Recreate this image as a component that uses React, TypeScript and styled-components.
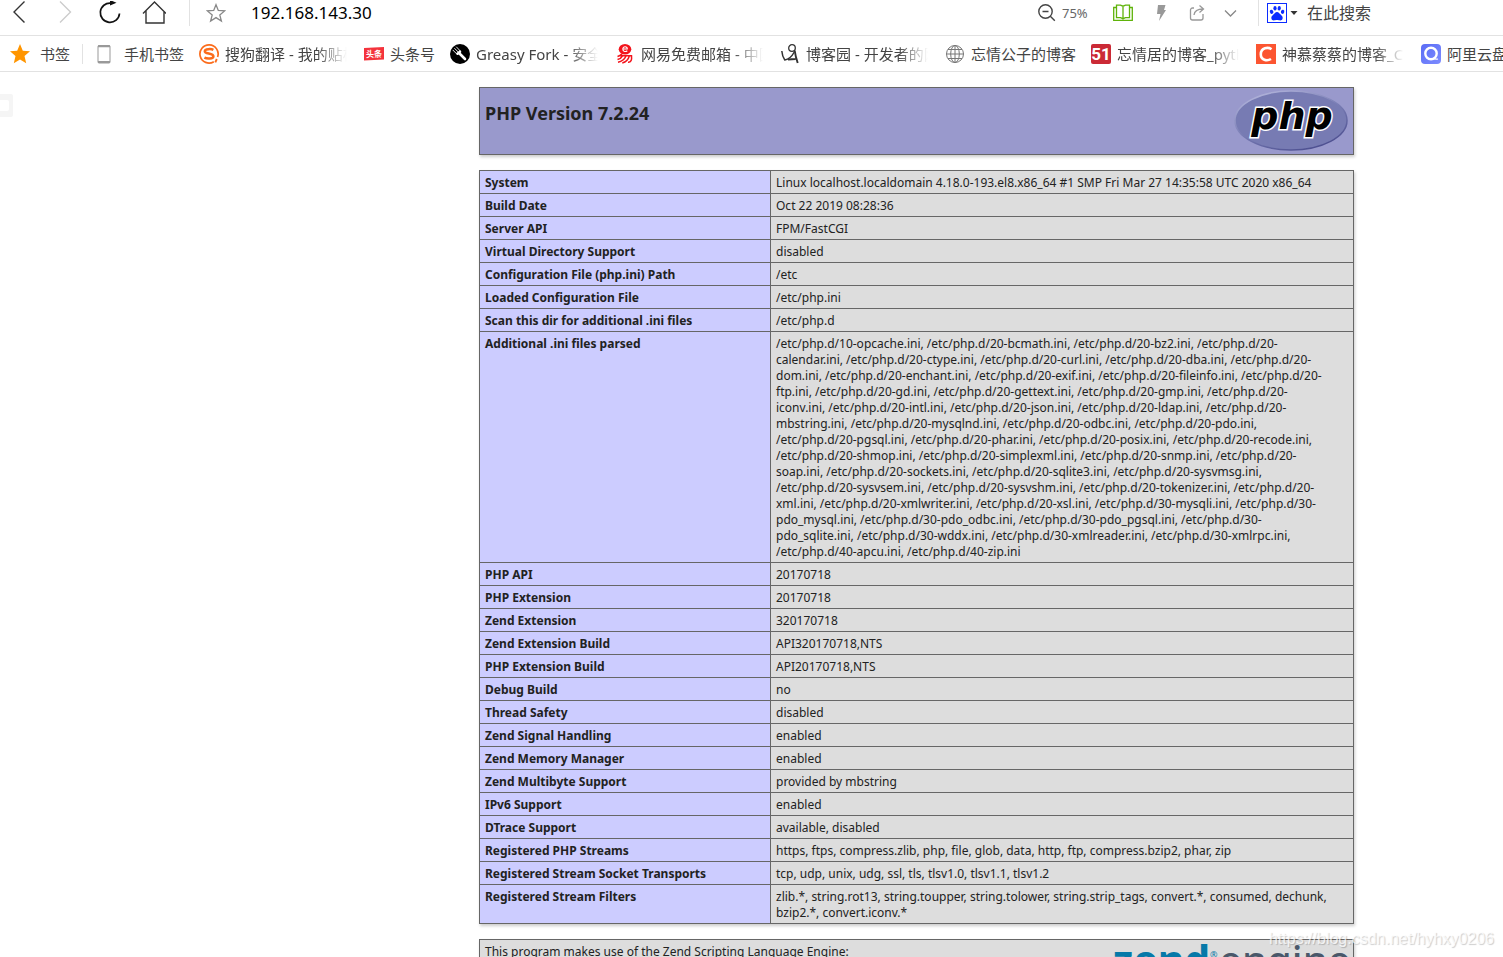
import React from "react";
import styled, { createGlobalStyle } from "styled-components";

const GlobalStyle = createGlobalStyle`
  * { box-sizing: border-box; }
  body {
    margin: 0;
    background: #fff;
    color: #222;
    font-family: "Noto Sans", "Noto Sans CJK SC", sans-serif;
  }
  button, input { font-family: inherit; }
`;

const Shell = styled.div`
  position: relative;
  display: flex;
  flex-direction: column;
  height: 100vh;
  overflow: hidden;
`;

const Toolbar = styled.header`
  display: flex;
  align-items: center;
  flex: none;
  height: 36px;
  padding: 0 0 10px 7px;
  border-bottom: 1px solid #e2e2e2;
`;

const ButtonGroup = styled.div<{ $gap: number }>`
  display: flex;
  align-items: center;
  gap: ${(p) => p.$gap}px;
`;

const IconButton = styled.button<{ $width?: number }>`
  display: flex;
  align-items: center;
  justify-content: center;
  flex: none;
  width: ${(p) => p.$width ?? 24}px;
  height: 24px;
  padding: 0;
  border: 0;
  background: none;
`;

const Separator = styled.span<{ $height: number; $margin: string }>`
  flex: none;
  width: 1px;
  height: ${(p) => p.$height}px;
  margin: ${(p) => p.$margin};
  background: #e2e2e2;
`;

const AddressInput = styled.input`
  flex: 1;
  min-width: 0;
  height: 26px;
  padding: 0;
  margin-left: 25px;
  border: 0;
  outline: 0;
  background: none;
  color: #000;
  font-size: 17px;
`;

const ZoomButton = styled.button`
  display: flex;
  align-items: center;
  gap: 6px;
  width: 75px;
  height: 24px;
  padding: 0;
  border: 0;
  background: none;
  color: #666;
  font-size: 13px;
`;

const EngineButton = styled(IconButton)`
  justify-content: flex-start;
  gap: 3px;
`;

const SearchInput = styled.input`
  flex: none;
  width: 196px;
  height: 26px;
  padding: 0;
  margin-left: 8px;
  border: 0;
  outline: 0;
  background: none;
  font-size: 16px;
  &::placeholder { color: #444; opacity: 1; }
`;

const BookmarkBar = styled.nav`
  display: flex;
  align-items: center;
  flex: none;
  height: 36px;
  padding: 0 0 0 10px;
  border-bottom: 1px solid #e2e2e2;
  overflow: hidden;
`;

const BookmarkList = styled.div`
  display: flex;
  align-items: center;
  gap: 15px;
`;

const Bookmark = styled.a<{ $gap?: number }>`
  display: flex;
  align-items: flex-start;
  flex: none;
  gap: ${(p) => p.$gap ?? 6}px;
  color: #444;
  font-size: 15px;
  line-height: 20px;
  text-decoration: none;
  svg { flex: none; }
`;

const BookmarkLabel = styled.span<{ $fade?: boolean }>`
  max-width: 124px;
  overflow: hidden;
  white-space: nowrap;
  ${(p) =>
    p.$fade &&
    `width: 124px;
     mask-image: linear-gradient(to right, #000 92px, transparent 122px);`}
`;

const Page = styled.main`
  display: flex;
  flex: 1;
  min-height: 0;
  justify-content: flex-end;
  padding: 15px 149px 0 0;
  overflow: hidden;
`;

const Info = styled.div`
  display: flex;
  flex-direction: column;
  flex: none;
  gap: 15px;
  width: 875px;
  font-size: 12px;
  line-height: 16px;
`;

const Banner = styled.section`
  display: flex;
  justify-content: space-between;
  align-items: flex-start;
  flex: none;
  height: 68px;
  padding: 2px 5px;
  border: 1px solid #666;
  background: #99c;
  box-shadow: 1px 2px 3px #ccc;
`;

const Title = styled.h1`
  margin: 10px 0 0;
  font-size: 18px;
  line-height: 26px;
`;

const InfoTable = styled.table`
  flex: none;
  width: 100%;
  border-collapse: collapse;
  table-layout: fixed;
  box-shadow: 1px 2px 3px #ccc;
`;

const Key = styled.th`
  width: 291px;
  padding: 4px 5px 2px;
  border: 1px solid #666;
  background: #ccf;
  text-align: left;
  vertical-align: top;
`;

const Value = styled.td`
  padding: 4px 5px 2px;
  border: 1px solid #666;
  background: #ddd;
  white-space: pre;
  vertical-align: top;
`;

const Credits = styled.section`
  display: flex;
  justify-content: space-between;
  flex: none;
  height: 60px;
  padding: 4px 0 4px 5px;
  border: 1px solid #666;
  background: #ddd;
  box-shadow: 1px 2px 3px #ccc;
`;

const SideTab = styled.div`
  position: absolute;
  top: 94px;
  left: 0;
  width: 13px;
  height: 23px;
  padding: 6px 4px 6px 0;
  border-radius: 0 2px 2px 0;
  background: #f5f5f5;
  &::before {
    content: "";
    display: block;
    height: 11px;
    border-radius: 0 2px 2px 0;
    background: #fff;
  }
`;

const Watermark = styled.div`
  position: absolute;
  right: 9px;
  bottom: 8px;
  color: rgba(255, 255, 255, 0.75);
  font-family: "Liberation Sans", sans-serif;
  font-size: 16px;
  line-height: 20px;
  text-shadow: 1px 1px 1px rgba(0, 0, 0, 0.2);
`;

const BackIcon = () => (
  <svg width="24" height="24" viewBox="0 0 24 24" fill="none" stroke="#333" strokeWidth="1.4">
    <path d="M17.5 0.5 7 11l10.500 10.500" />
  </svg>
);
const ForwardIcon = () => (
  <svg width="24" height="24" viewBox="0 0 24 24" fill="none" stroke="#ccc" strokeWidth="1.4">
    <path d="M8 0.500 18.500 11 8 21.500" />
  </svg>
);
const ReloadIcon = () => (
  <svg width="24" height="24" viewBox="0 0 24 24" fill="none" stroke="#111" strokeWidth="1.700">
    <path d="M22.500 12.500A9.600 9.600 0 1 1 14 2.200" />
    <path d="M13-1 19.500 1.800 13 4.500Z" fill="#111" stroke="none" />
  </svg>
);
const HomeIcon = () => (
  <svg width="24" height="24" viewBox="0 0 24 24" fill="none" stroke="#333" strokeWidth="1.400">
    <path d="M1 12.500 12.500 1 24 12.500M4 10v12h18V10" />
  </svg>
);
const StarOutline = () => (
  <svg width="20" height="20" viewBox="0 0 20 20" fill="none" stroke="#888" strokeWidth="1.300">
    <path d="m10 1.700 2.300 5.800 6.300.4-4.800 4 1.600 6.100L10 14.600 4.600 18l1.600-6.100-4.800-4 6.300-.4Z" />
  </svg>
);
const ZoomOutIcon = () => (
  <svg width="18" height="18" viewBox="0 0 18 18" fill="none" stroke="#444" strokeWidth="1.400">
    <circle cx="7.500" cy="7.500" r="6.700" />
    <path d="M4.500 7.500h6M12.300 12.300l4.500 4.500" />
  </svg>
);
const BookIcon = () => (
  <svg width="20" height="18" viewBox="0 0 20 18" fill="none" stroke="#5fb30a" strokeWidth="1.300">
    <path d="M3.500 1.200h4L10 2.200l2.500-1h4v12.500h-4L10 14.700l-2.500-1h-4zM10 2.200v13.500" />
    <path d="M3 3.500H.7v12.800h18.600V3.500H17" />
  </svg>
);
const BoltIcon = () => (
  <svg width="20" height="18" viewBox="0 0 20 18" fill="#999">
    <path d="M9 1h7.500L15 6h2L10 17l1.500-7H8Z" />
  </svg>
);
const ShareIcon = () => (
  <svg width="20" height="18" viewBox="0 0 20 18" fill="none" stroke="#999" strokeWidth="1.300">
    <path d="M9 4H7.500A2 2 0 0 0 5.500 6v8a2 2 0 0 0 2 2h8.500a2 2 0 0 0 2-2v-4" />
    <path d="M9 11c.5-4 3-6 9-6M14.500 1.500 18.500 5l-4 3.500" />
  </svg>
);
const ChevronIcon = () => (
  <svg width="20" height="18" viewBox="0 0 20 18" fill="none" stroke="#888" strokeWidth="1.300">
    <path d="m4 6.500 5.500 5.500L15 6.500" />
  </svg>
);
const BaiduIcon = () => (
  <svg width="20" height="20" viewBox="0 0 20 20">
    <rect x=".5" y=".5" width="19" height="19" fill="#fff" stroke="#0b2cff" />
    <g fill="#0b2cff">
      <ellipse cx="4.600" cy="8.800" rx="1.700" ry="2.100" transform="rotate(-15 4.600 8.800)" />
      <ellipse cx="8" cy="5.200" rx="1.600" ry="2.200" />
      <ellipse cx="12.200" cy="5.200" rx="1.600" ry="2.200" transform="rotate(8 12.200 5.200)" />
      <ellipse cx="15.600" cy="8.800" rx="1.700" ry="2.100" transform="rotate(15 15.600 8.800)" />
      <path d="M10 8.900c1.800 0 2.400 1.500 3.600 2.700 1.300 1.300 2.400 2.200 2 4-.5 2-2.100 2-3.600 1.700-1.400-.3-2.600-.3-4 0-1.500.3-3.100.3-3.600-1.700-.4-1.800.7-2.700 2-4C7.600 10.400 8.200 8.900 10 8.900Z" />
    </g>
  </svg>
);
const CaretIcon = () => (
  <svg width="8" height="6" viewBox="0 0 8 6" fill="#333">
    <path d="M.5 1h7L4 5Z" />
  </svg>
);

const StarIcon = () => (
  <svg width="20" height="20" viewBox="0 0 20 20" fill="#ff9500">
    <path d="m10 0 2.800 6.700 7.200.6-5.500 4.700 1.700 7.200L10 15.400l-6.200 3.800L5.500 12 0 7.300l7.200-.6Z" />
  </svg>
);
const PhoneIcon = () => (
  <svg width="20" height="20" viewBox="0 0 20 20" fill="none" stroke="#999">
    <rect x="4" y="1.500" width="12" height="17.500" rx="1" />
    <path d="M4 2.300h12M4 18h12" strokeWidth="2" />
  </svg>
);
const SogouIcon = () => (
  <svg width="20" height="20" viewBox="0 0 20 20" fill="none" stroke="#fb6c1c">
    <path d="M14.800 17.700A9.100 9.100 0 1 1 18.600 13" strokeWidth="1.700" />
    <path d="M14.400 5.800C12.500 4.800 5.800 4.500 5.800 7.400c0 2.700 8.600 1.500 8.600 4.800 0 3-6.700 2.700-9 1.400" strokeWidth="2.500" />
    <path d="m17.800 15-1.500 3.300" strokeWidth="1.900" />
  </svg>
);
const ToutiaoIcon = () => (
  <svg width="20" height="20" viewBox="0 0 20 20">
    <path d="M0 4 20 3v12.500L0 16.500Z" fill="#f4333c" />
    <text x="10" y="13" textAnchor="middle" fontSize="8" fontWeight="700" fill="#fff" fontFamily="Noto Sans CJK SC, sans-serif">
      头条
    </text>
  </svg>
);
const ForkIcon = () => (
  <svg width="20" height="20" viewBox="0 0 20 20">
    <circle cx="10" cy="10" r="10" fill="#000" />
    <g fill="none" stroke="#fff" strokeLinecap="round">
      <path d="m3 6.200 3.500 3.500M4.700 4.500l3.500 3.500M6.500 3l3.500 3.700" strokeWidth=".9" />
      <path d="M7.500 9.700 10 7.700" strokeWidth="2.600" />
      <path d="m9.500 9.500 5.500 5.500" strokeWidth="2.600" />
    </g>
  </svg>
);
const NeteaseIcon = () => (
  <svg width="20" height="20" viewBox="0 0 20 20" fill="none" stroke="#f3131b">
    <ellipse cx="10" cy="5.200" rx="6.300" ry="5.200" fill="#f3131b" stroke="none" />
    <path d="M7.800 5h4.500c0-3-4.500-3-4.500 0 0 3 3 3 4.500 1.800" stroke="#fff" strokeWidth="1.100" />
    <path d="M2.500 12.500C5 12 6 11 7 9.800M5 11.800h11.500c.5 4-.5 6.700-3.500 6.500M7.500 11.800c-1 2-3 3.200-5 3.700M11 12c-1.500 3.500-4.500 5.500-8 6.300M14.300 12c-1 3.700-3.500 6-7 7" strokeWidth="1.500" />
  </svg>
);
const CnblogsIcon = () => (
  <svg width="20" height="20" viewBox="0 0 20 20" fill="none" stroke="#333">
    <circle cx="12" cy="4" r="3.300" strokeWidth="1.300" />
    <path d="M1.800 7c.3 3.500 1.200 6.500 3 9 3-.5 6.500-2.500 9.500-8" strokeWidth="1.500" />
    <path d="M14.700 6.500c.5 4 1.500 8 3 12.500M8 15.500l7.500-.5" strokeWidth="1.900" />
  </svg>
);
const GlobeIcon = () => (
  <svg width="20" height="20" viewBox="0 0 20 20" fill="none" stroke="#777" strokeWidth="1">
    <circle cx="10" cy="10" r="8.500" />
    <ellipse cx="10" cy="10" rx="4.300" ry="8.500" />
    <path d="M10 1.500v17M1.500 10h17M3 5.500h14M3 14.500h14" />
  </svg>
);
const FiftyOneIcon = () => (
  <svg width="20" height="20" viewBox="0 0 20 20">
    <rect width="20" height="20" rx="2" fill="#cb2a36" />
    <text x="10" y="16" textAnchor="middle" fontSize="17" fontWeight="700" fill="#fff" fontFamily="Liberation Sans Narrow, Roboto, sans-serif">
      51
    </text>
  </svg>
);
const CsdnIcon = () => (
  <svg width="20" height="20" viewBox="0 0 20 20">
    <rect width="20" height="20" fill="#fc5531" />
    <path d="M15.500 5.200C12 2.800 5 3.600 4.800 10.200c-.1 6 6.200 7.300 10.200 4.800" fill="none" stroke="#fff" strokeWidth="2.600" />
  </svg>
);
const AliyunIcon = () => (
  <svg width="20" height="20" viewBox="0 0 20 20">
    <defs>
      <linearGradient id="aliyun" x1="0" y1="0" x2="1" y2="1">
        <stop offset="0" stopColor="#5a6cf5" />
        <stop offset="1" stopColor="#7d8cff" />
      </linearGradient>
    </defs>
    <rect width="20" height="20" rx="4" fill="url(#aliyun)" />
    <circle cx="10" cy="9.500" r="5.700" fill="none" stroke="#fff" strokeWidth="2.400" />
    <path d="M12 14c1.500 1.200 3 1.500 5 1" fill="none" stroke="#fff" strokeWidth="1.200" />
  </svg>
);

const PhpLogo = () => (
  <svg width="114" height="61" viewBox="0 0 114 61" role="img" aria-label="PHP logo">
    <defs>
      <linearGradient id="rim" x1="0.200" y1="0" x2="0.800" y2="1">
        <stop offset="0" stopColor="#b4b6dc" />
        <stop offset="0.500" stopColor="#777bb3" />
        <stop offset="1" stopColor="#484a8c" />
      </linearGradient>
    </defs>
    <ellipse cx="57" cy="30.500" rx="56" ry="29.500" fill="#777bb3" stroke="url(#rim)" strokeWidth="1.500" />
    <text
      x="58"
      y="39"
      textAnchor="middle"
      fontFamily="DejaVu Sans, sans-serif"
      fontSize="38"
      fontWeight="700"
      fontStyle="italic"
      fill="#000"
      stroke="#fff"
      strokeWidth="3"
      paintOrder="stroke"
    >
      php
    </text>
  </svg>
);

const ZendLogo = () => (
  <svg width="240" height="50" viewBox="0 0 240 50" role="img" aria-label="Zend engine logo" fontFamily="Noto Sans, sans-serif">
    <text x="0" y="31" fontSize="41" fontWeight="700" fill="#0679a8">
      zend
    </text>
    <text x="97" y="14" fontSize="9" fill="#0679a8">
      ®
    </text>
    <text x="106" y="31" fontSize="40" fontWeight="500" fill="#4a586a">
      engine
    </text>
  </svg>
);

const bookmarks: { label: string; icon: React.ReactNode; fade?: boolean }[] = [
  { label: "搜狗翻译 - 我的贴板", icon: <SogouIcon />, fade: true },
  { label: "头条号", icon: <ToutiaoIcon /> },
  { label: "Greasy Fork - 安全", icon: <ForkIcon />, fade: true },
  { label: "网易免费邮箱 - 中国", icon: <NeteaseIcon />, fade: true },
  { label: "博客园 - 开发者的网", icon: <CnblogsIcon />, fade: true },
  { label: "忘情公子的博客", icon: <GlobeIcon /> },
  { label: "忘情居的博客_python", icon: <FiftyOneIcon />, fade: true },
  { label: "神慕蔡蔡的博客_CSDN", icon: <CsdnIcon />, fade: true },
  { label: "阿里云盘", icon: <AliyunIcon /> },
];

const iniFiles = `/etc/php.d/10-opcache.ini, /etc/php.d/20-bcmath.ini, /etc/php.d/20-bz2.ini, /etc/php.d/20-
calendar.ini, /etc/php.d/20-ctype.ini, /etc/php.d/20-curl.ini, /etc/php.d/20-dba.ini, /etc/php.d/20-
dom.ini, /etc/php.d/20-enchant.ini, /etc/php.d/20-exif.ini, /etc/php.d/20-fileinfo.ini, /etc/php.d/20-
ftp.ini, /etc/php.d/20-gd.ini, /etc/php.d/20-gettext.ini, /etc/php.d/20-gmp.ini, /etc/php.d/20-
iconv.ini, /etc/php.d/20-intl.ini, /etc/php.d/20-json.ini, /etc/php.d/20-ldap.ini, /etc/php.d/20-
mbstring.ini, /etc/php.d/20-mysqlnd.ini, /etc/php.d/20-odbc.ini, /etc/php.d/20-pdo.ini,
/etc/php.d/20-pgsql.ini, /etc/php.d/20-phar.ini, /etc/php.d/20-posix.ini, /etc/php.d/20-recode.ini,
/etc/php.d/20-shmop.ini, /etc/php.d/20-simplexml.ini, /etc/php.d/20-snmp.ini, /etc/php.d/20-
soap.ini, /etc/php.d/20-sockets.ini, /etc/php.d/20-sqlite3.ini, /etc/php.d/20-sysvmsg.ini,
/etc/php.d/20-sysvsem.ini, /etc/php.d/20-sysvshm.ini, /etc/php.d/20-tokenizer.ini, /etc/php.d/20-
xml.ini, /etc/php.d/20-xmlwriter.ini, /etc/php.d/20-xsl.ini, /etc/php.d/30-mysqli.ini, /etc/php.d/30-
pdo_mysql.ini, /etc/php.d/30-pdo_odbc.ini, /etc/php.d/30-pdo_pgsql.ini, /etc/php.d/30-
pdo_sqlite.ini, /etc/php.d/30-wddx.ini, /etc/php.d/30-xmlreader.ini, /etc/php.d/30-xmlrpc.ini,
/etc/php.d/40-apcu.ini, /etc/php.d/40-zip.ini`;

const rows: [string, string][] = [
  ["System", "Linux localhost.localdomain 4.18.0-193.el8.x86_64 #1 SMP Fri Mar 27 14:35:58 UTC 2020 x86_64"],
  ["Build Date", "Oct 22 2019 08:28:36"],
  ["Server API", "FPM/FastCGI"],
  ["Virtual Directory Support", "disabled"],
  ["Configuration File (php.ini) Path", "/etc"],
  ["Loaded Configuration File", "/etc/php.ini"],
  ["Scan this dir for additional .ini files", "/etc/php.d"],
  ["Additional .ini files parsed", iniFiles],
  ["PHP API", "20170718"],
  ["PHP Extension", "20170718"],
  ["Zend Extension", "320170718"],
  ["Zend Extension Build", "API320170718,NTS"],
  ["PHP Extension Build", "API20170718,NTS"],
  ["Debug Build", "no"],
  ["Thread Safety", "disabled"],
  ["Zend Signal Handling", "enabled"],
  ["Zend Memory Manager", "enabled"],
  ["Zend Multibyte Support", "provided by mbstring"],
  ["IPv6 Support", "enabled"],
  ["DTrace Support", "available, disabled"],
  ["Registered PHP Streams", "https, ftps, compress.zlib, php, file, glob, data, http, ftp, compress.bzip2, phar, zip"],
  ["Registered Stream Socket Transports", "tcp, udp, unix, udg, ssl, tls, tlsv1.0, tlsv1.1, tlsv1.2"],
  [
    "Registered Stream Filters",
    "zlib.*, string.rot13, string.toupper, string.tolower, string.strip_tags, convert.*, consumed, dechunk,\nbzip2.*, convert.iconv.*",
  ],
];

export default function App() {
  return (
    <Shell>
      <GlobalStyle />
      <Toolbar>
        <ButtonGroup $gap={21}>
          <IconButton aria-label="Back"><BackIcon /></IconButton>
          <IconButton aria-label="Forward"><ForwardIcon /></IconButton>
          <IconButton aria-label="Reload"><ReloadIcon /></IconButton>
          <IconButton aria-label="Home"><HomeIcon /></IconButton>
        </ButtonGroup>
        <Separator $height={26} $margin="0 16px 0 23px" />
        <IconButton $width={20} aria-label="Add bookmark"><StarOutline /></IconButton>
        <AddressInput aria-label="Address" defaultValue="192.168.143.30" />
        <ZoomButton aria-label="Zoom 75%"><ZoomOutIcon />75%</ZoomButton>
        <ButtonGroup $gap={16}>
          <IconButton $width={20} aria-label="Reading mode"><BookIcon /></IconButton>
          <IconButton $width={20} aria-label="Speed mode"><BoltIcon /></IconButton>
          <IconButton $width={20} aria-label="Share"><ShareIcon /></IconButton>
          <IconButton $width={20} aria-label="More"><ChevronIcon /></IconButton>
        </ButtonGroup>
        <Separator $height={26} $margin="0 8px 0 17px" />
        <EngineButton $width={32} aria-label="Search engine"><BaiduIcon /><CaretIcon /></EngineButton>
        <SearchInput aria-label="Search" placeholder="在此搜索" />
      </Toolbar>
      <BookmarkBar aria-label="Bookmarks">
        <Bookmark href="#" $gap={10}><StarIcon /><BookmarkLabel>书签</BookmarkLabel></Bookmark>
        <Separator $height={20} $margin="0 11px 0 12px" />
        <BookmarkList>
          <Bookmark href="#" $gap={10}><PhoneIcon /><BookmarkLabel>手机书签</BookmarkLabel></Bookmark>
          {bookmarks.map((b) => (
            <Bookmark key={b.label} href="#">
              {b.icon}
              <BookmarkLabel $fade={b.fade}>{b.label}</BookmarkLabel>
            </Bookmark>
          ))}
        </BookmarkList>
      </BookmarkBar>
      <Page>
        <Info>
          <Banner>
            <Title>PHP Version 7.2.24</Title>
            <PhpLogo />
          </Banner>
          <InfoTable>
            <tbody>
              {rows.map(([key, value]) => (
                <tr key={key}>
                  <Key scope="row">{key}</Key>
                  <Value>{value}</Value>
                </tr>
              ))}
            </tbody>
          </InfoTable>
          <Credits>
            <span>This program makes use of the Zend Scripting Language Engine:</span>
            <ZendLogo />
          </Credits>
        </Info>
      </Page>
      <SideTab />
      <Watermark>https://blog.csdn.net/hyhxy0206</Watermark>
    </Shell>
  );
}
